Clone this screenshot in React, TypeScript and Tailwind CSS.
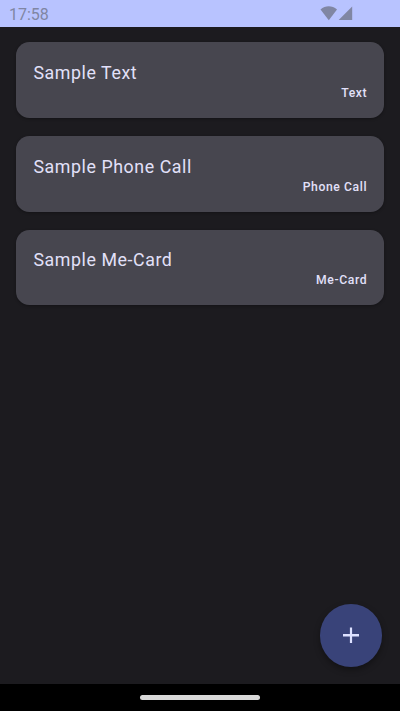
import React from "react";

type Entry = { title: string; kind: string };

const entries: Entry[] = [
  { title: "Sample Text", kind: "Text" },
  { title: "Sample Phone Call", kind: "Phone Call" },
  { title: "Sample Me-Card", kind: "Me-Card" },
];

function StatusBar() {
  return (
    <header className="flex h-[27px] shrink-0 items-center justify-between bg-[#b8c3ff] pl-[9px] pr-[47px] text-[#8086a3]">
      <span className="pt-[2px] text-[16px] leading-5">17:58</span>
      <svg width="33" height="15" viewBox="0 0 33 15" fill="currentColor" aria-hidden="true">
        <path d="M0.5 3.4C5.3-0.7 12.1-0.7 17 3.4L8.8 14.2Z" />
        <path d="M32.2 0.5V14H18.7Z" />
      </svg>
    </header>
  );
}

function EntryCard({ title, kind }: Entry) {
  return (
    <li className="flex h-[75.7px] flex-col rounded-[13.3px] bg-[#47464f] px-[17.8px] pt-[17.7px] text-[#e2e0f9] shadow-[0_1px_3px_rgba(0,0,0,0.3)]">
      <span className="text-[17.8px] leading-[26px] tracking-[0.58px]">{title}</span>
      <span className="-mr-[0.6px] self-end text-[12.2px] font-medium leading-[14px] tracking-[0.6px]">{kind}</span>
    </li>
  );
}

export default function App() {
  return (
    <div className="flex h-[711px] w-[400px] flex-col overflow-hidden bg-[#1c1b1f] font-['Roboto',sans-serif]">
      <StatusBar />
      <main className="flex min-h-0 flex-1 flex-col justify-between">
        <ul className="flex flex-col gap-[18px] px-[15.6px] pt-[15.2px]">
          {entries.map((entry) => (
            <EntryCard key={entry.title} {...entry} />
          ))}
        </ul>
        <button
          type="button"
          aria-label="Add"
          className="mr-[17.8px] mb-[17.5px] flex size-[62.2px] items-center justify-center self-end rounded-full bg-[#394379] text-[#dde1ff] shadow-[0_3px_6px_rgba(0,0,0,0.35)]"
        >
          <svg width="16" height="16" viewBox="0 0 16 16" fill="currentColor" aria-hidden="true">
            <path d="M6.9 0.5H9.1V6.9H16V9.5H9.1V16H6.9V9.5H0V6.9H6.9Z" />
          </svg>
        </button>
      </main>
      <nav className="flex h-[27px] shrink-0 items-center justify-center bg-black">
        <div className="h-[4.5px] w-[120px] rounded-full bg-[#d9d9d9]" />
      </nav>
    </div>
  );
}
